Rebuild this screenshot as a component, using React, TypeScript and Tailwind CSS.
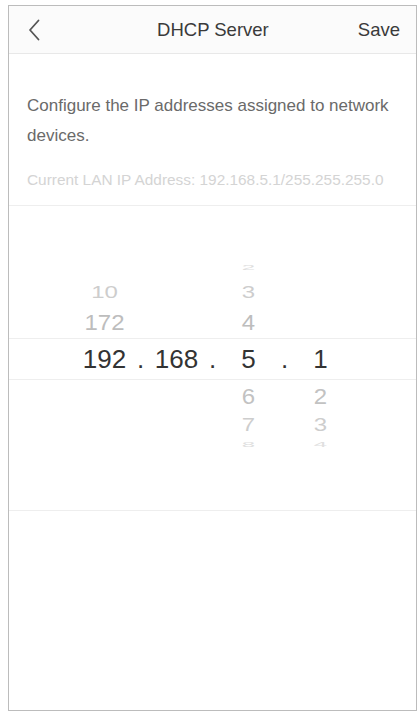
import React from "react";

type Cell = { t: string; cls: string } | null;

const rows: { h: string; cells: Cell[]; sel?: boolean }[] = [
  {
    h: "h-[22px]",
    cells: [null, null, { t: "2", cls: "text-[24px] text-[#dedede] scale-y-[0.3]" }, null],
  },
  {
    h: "h-[27px]",
    cells: [
      { t: "10", cls: "text-[24px] text-[#cdcdcd] scale-y-[0.66]" },
      null,
      { t: "3", cls: "text-[24px] text-[#cdcdcd] scale-y-[0.68]" },
      null,
    ],
  },
  {
    h: "h-[32px]",
    cells: [
      { t: "172", cls: "text-[24px] text-[#bdbdbd] scale-y-[0.95]" },
      null,
      { t: "4", cls: "text-[24px] text-[#bdbdbd] scale-y-[0.95]" },
      null,
    ],
  },
  {
    h: "h-[42px]",
    sel: true,
    cells: [
      { t: "192", cls: "text-[26px] text-[#333333]" },
      { t: "168", cls: "text-[26px] text-[#333333]" },
      { t: "5", cls: "text-[26px] text-[#333333]" },
      { t: "1", cls: "text-[26px] text-[#333333]" },
    ],
  },
  {
    h: "h-[32px]",
    cells: [
      null,
      null,
      { t: "6", cls: "text-[24px] text-[#c2c2c2] scale-y-[0.95]" },
      { t: "2", cls: "text-[24px] text-[#c2c2c2] scale-y-[0.95]" },
    ],
  },
  {
    h: "h-[25px]",
    cells: [
      null,
      null,
      { t: "7", cls: "text-[24px] text-[#cdcdcd] scale-y-[0.78]" },
      { t: "3", cls: "text-[24px] text-[#cdcdcd] scale-y-[0.78]" },
    ],
  },
  {
    h: "h-[16px]",
    cells: [
      null,
      null,
      { t: "8", cls: "text-[24px] text-[#e0e0e0] scale-y-[0.3]" },
      { t: "4", cls: "text-[24px] text-[#e0e0e0] scale-y-[0.3]" },
    ],
  },
];

function Dot({ show }: { show: boolean }) {
  return (
    <div className="w-0 flex justify-center items-center">
      {show ? <span className="text-[26px] leading-none text-[#333333]">.</span> : null}
    </div>
  );
}

function CellView({ c }: { c: Cell }) {
  return (
    <div className="w-[72px] flex justify-center items-center">
      {c ? <span className={"leading-none inline-block " + c.cls}>{c.t}</span> : null}
    </div>
  );
}

export default function App() {
  return (
    <div
      className="w-[420px] h-[712px] bg-white pt-[5px] pl-[8px] pr-[3px] pb-[1px]"
      style={{ fontFamily: '"Liberation Sans", Arial, sans-serif' }}
    >
      <div className="w-full h-full border border-[#bcbcbc] flex flex-col bg-white">
        {/* Header */}
        <div className="h-[48px] shrink-0 bg-[#fbfbfb] border-b border-[#e8e8e8] flex items-center justify-between pl-[19px] pr-[16px]">
          <svg width="12" height="22" viewBox="0 0 12 22" fill="none">
            <path d="M10.5 1.5 L2 11 L10.5 20.5" stroke="#555555" strokeWidth="1.8" strokeLinecap="round" strokeLinejoin="round" />
          </svg>
          <div className="text-[18.5px] text-[#3a3a3a] pl-[28px]">DHCP Server</div>
          <div className="text-[18.5px] text-[#3a3a3a]">Save</div>
        </div>

        {/* Description */}
        <div className="pt-[37px] pb-[15px] pl-[18px] pr-[16px] border-b border-[#eeeeee]">
          <p className="text-[17px] leading-[30px] text-[#6a6a6a]">
            Configure the IP addresses assigned to network devices.
          </p>
          <p className="mt-[19px] text-[15.4px] leading-[20px] text-[#d4d4d4] whitespace-nowrap">
            Current LAN IP Address: 192.168.5.1/255.255.255.0
          </p>
        </div>

        {/* Picker */}
        <div className="h-[305px] shrink-0 border-b border-[#eeeeee] pt-[51px] flex flex-col">
          {rows.map((r, i) => (
            <div
              key={i}
              className={
                r.h +
                " flex justify-center " +
                (r.sel ? "border-y border-[#eeeeee]" : "")
              }
            >
              <CellView c={r.cells[0]} />
              <Dot show={!!r.sel} />
              <CellView c={r.cells[1]} />
              <Dot show={!!r.sel} />
              <CellView c={r.cells[2]} />
              <Dot show={!!r.sel} />
              <CellView c={r.cells[3]} />
            </div>
          ))}
        </div>

        <div className="flex-1" />
      </div>
    </div>
  );
}
